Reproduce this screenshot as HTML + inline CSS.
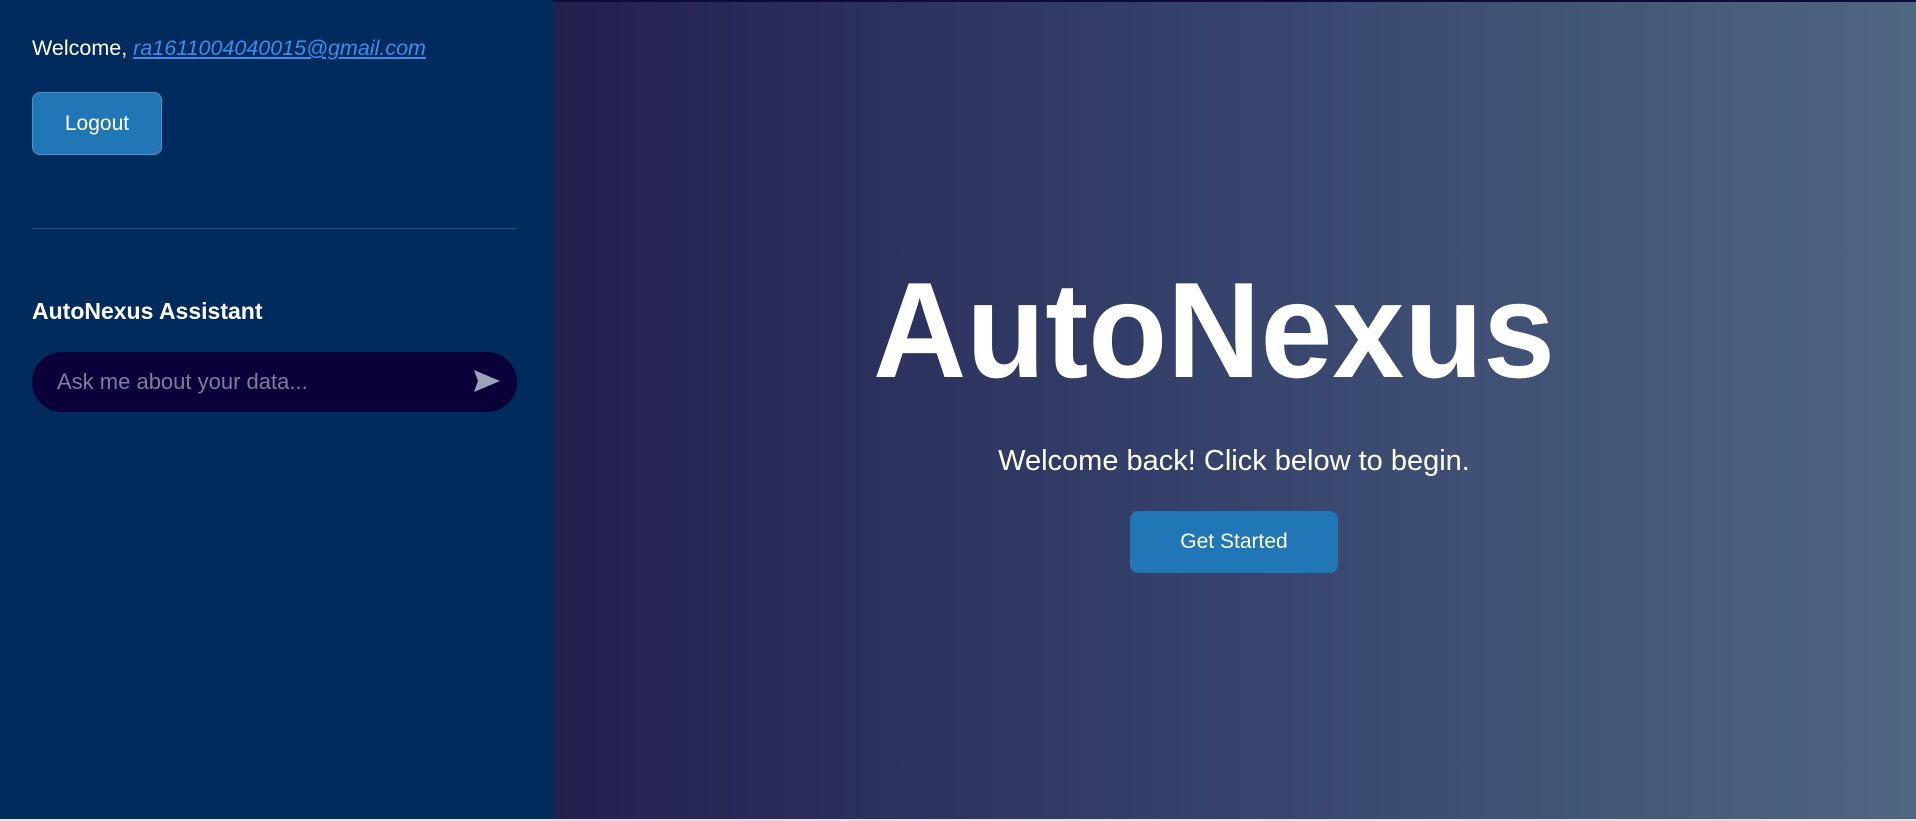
<!DOCTYPE html>
<html><head><meta charset="utf-8"><style>
*{margin:0;padding:0;box-sizing:border-box}
body{width:1916px;height:821px;overflow:hidden;font-family:"Liberation Sans",sans-serif;position:relative;background:#002b5c}
.side{position:absolute;left:0;top:0;width:553px;height:821px;background:#002b5c}
.main{position:absolute;left:553px;top:0;right:0;height:821px;background:linear-gradient(90deg,#231f50 0%,#34406a 45%,#4e6781 100%);border-top:2px solid #0e0a3a}
.bot{position:absolute;left:0;right:0;bottom:0;height:2px;background:#e8e4dc}
.wel{position:absolute;left:32px;top:36px;font-size:21.5px;color:#fff;white-space:nowrap}
.wel a{color:#3a8ef0;font-style:italic;text-decoration:underline}
.logout{position:absolute;left:32px;top:92px;width:130px;height:63px;background:#2176b5;border:1px solid #4a94cc;border-radius:8px;color:#fff;font-size:21px;display:flex;align-items:center;justify-content:center}
.hr{position:absolute;left:32px;top:228px;width:485px;height:1px;background:#2c5282}
.h{position:absolute;left:32px;top:298px;font-size:23px;font-weight:bold;color:#fff;white-space:nowrap}
.inp{position:absolute;left:32px;top:352px;width:485px;height:60px;background:#0a003a;border-radius:30px}
.ph{position:absolute;left:25px;top:17px;font-size:22px;color:#7f7a9f;white-space:nowrap}
.ic{position:absolute;left:441px;top:17px}
.title{position:absolute;left:1214px;top:252px;font-size:136px;font-weight:bold;color:#fff;transform:translateX(-50%) scaleX(0.95);white-space:nowrap;line-height:1.15}
.t{position:absolute;left:1234px;transform:translateX(-50%);white-space:nowrap;color:#fff}
.sub{top:445px;font-size:29px}
.btn{position:absolute;left:1130px;top:511px;width:208px;height:62px;background:#2176b5;border-radius:8px;color:#fff;font-size:21px;display:flex;align-items:center;justify-content:center}
</style></head><body>
<div class="side">
<div class="wel">Welcome, <a>ra1611004040015@gmail.com</a></div>
<div class="logout">Logout</div>
<div class="hr"></div>
<div class="h">AutoNexus Assistant</div>
<div class="inp"><div class="ph">Ask me about your data...</div>
<svg class="ic" width="28" height="24" viewBox="0 0 28 24"><path d="M1 1 L27 12 L1 23 L5 12 Z" fill="#9ea3bc"/></svg></div>
</div>
<div class="main"></div>
<div class="title">AutoNexus</div>
<div class="t sub">Welcome back! Click below to begin.</div>
<div class="btn">Get Started</div>
<div class="bot"></div>
</body></html>
